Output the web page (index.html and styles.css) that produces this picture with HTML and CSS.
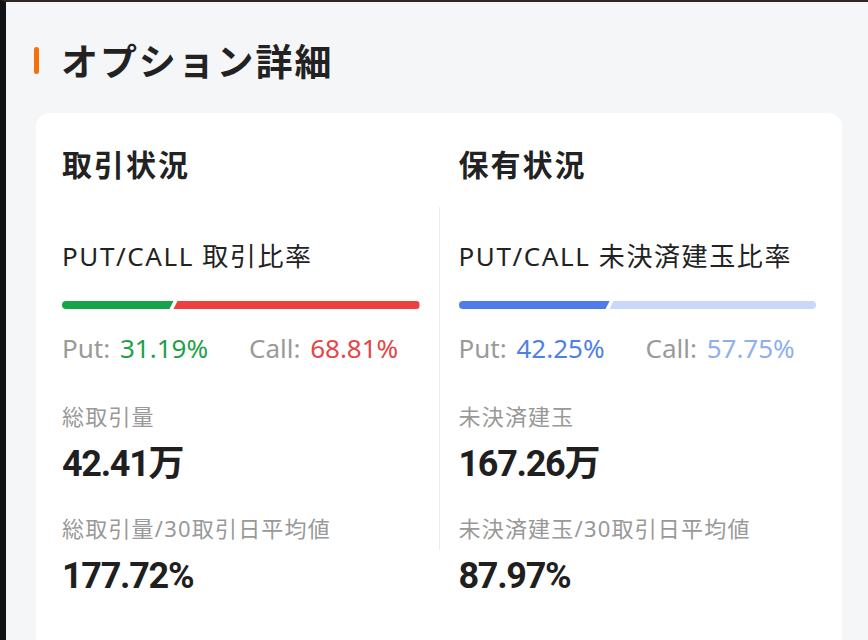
FILE: index.html
```html
<!DOCTYPE html>
<html lang="ja">
<head>
<meta charset="utf-8">
<link rel="stylesheet" href="styles.css">
</head>
<body>
<div class="page">
  <h1 class="title"><span class="mark"></span>オプション詳細</h1>
  <div class="card">
    <div class="col">
      <h2 class="col-title">取引状況</h2>
      <div class="ratio-label">PUT/CALL 取引比率</div>
      <div class="bar">
        <div class="seg seg-a green" style="width:31.19%"></div>
        <div class="seg seg-b red"></div>
      </div>
      <div class="pc">
        <span class="k">Put: <span class="v-green">31.19%</span></span>
        <span class="k">Call: <span class="v-red">68.81%</span></span>
      </div>
      <div class="stat-label first">総取引量</div>
      <div class="stat-value">42.41万</div>
      <div class="stat-label">総取引量/30取引日平均値</div>
      <div class="stat-value">177.72%</div>
    </div>
    <div class="divider"></div>
    <div class="col">
      <h2 class="col-title">保有状況</h2>
      <div class="ratio-label">PUT/CALL 未決済建玉比率</div>
      <div class="bar">
        <div class="seg seg-a blue" style="width:42.25%"></div>
        <div class="seg seg-b lightblue"></div>
      </div>
      <div class="pc">
        <span class="k">Put: <span class="v-blue">42.25%</span></span>
        <span class="k">Call: <span class="v-lightblue">57.75%</span></span>
      </div>
      <div class="stat-label first">未決済建玉</div>
      <div class="stat-value">167.26万</div>
      <div class="stat-label">未決済建玉/30取引日平均値</div>
      <div class="stat-value">87.97%</div>
    </div>
  </div>
</div>
</body>
</html>
```

FILE: styles.css
```css
html, body {
  margin: 0;
  padding: 0;
  height: 100%;
}
body {
  background: #f5f6f8;
  border-left: 6px solid #111214;
  border-top: 2px solid #2e2622;
  box-sizing: border-box;
  font-family: "Noto Sans", "Noto Sans CJK JP", sans-serif;
  color: #222;
  overflow: hidden;
}
.page {
  padding: 32px 26px 0 30px;
}
.title {
  display: flex;
  align-items: center;
  margin: 0 0 27px -2px;
  height: 52px;
  font-size: 37px;
  font-weight: 700;
  color: #222;
  letter-spacing: 1.9px;
}
.mark {
  width: 5px;
  height: 27px;
  border-radius: 3px;
  background: #f5700a;
  margin-right: 22px;
}
.card {
  background: #fff;
  border-radius: 14px 14px 0 0;
  padding: 32px 26px 60px 26px;
  display: grid;
  grid-template-columns: 1fr 1px 1fr;
  column-gap: 19px;
  align-items: start;
}
.divider {
  margin-top: 62px;
  height: 343px;
  background: #ececec;
}
.col-title {
  margin: 0;
  font-size: 30px;
  line-height: 40px;
  font-weight: 700;
  color: #222;
  letter-spacing: 2px;
}
.ratio-label {
  margin-top: 53px;
  font-size: 26px;
  line-height: 36px;
  color: #222;
  letter-spacing: 1.6px;
}
.bar {
  margin-top: 27px;
  height: 8px;
  display: flex;
}
.seg {
  height: 8px;
}
.seg-a {
  border-radius: 4px 0 0 4px;
  clip-path: polygon(0 0, 100% 0, calc(100% - 4px) 100%, 0 100%);
}
.seg-b {
  flex: 1;
  margin-left: -1px;
  border-radius: 0 4px 4px 0;
  clip-path: polygon(5px 0, 100% 0, 100% 100%, 1px 100%);
}
.green { background: #17a34a; }
.red { background: #ef4040; }
.blue { background: #4f7ce9; }
.lightblue { background: #c9d8f8; }
.pc {
  margin-top: 21px;
  font-size: 26px;
  line-height: 36px;
  display: flex;
  gap: 41px;
  word-spacing: 3px;
}
.k { color: #9a9a9a; }
.v-green { color: #1f9f4c; }
.v-red { color: #e34646; }
.v-blue { color: #4f80e6; }
.v-lightblue { color: #8db0ef; }
.stat-label {
  margin-top: 29px;
  font-size: 22px;
  line-height: 30px;
  color: #999;
  letter-spacing: 1.2px;
}
.stat-label.first {
  margin-top: 35px;
}
.stat-value {
  margin-top: 13px;
  font-family: "Roboto", "Noto Sans CJK JP", sans-serif;
  font-size: 36px;
  line-height: 40px;
  font-weight: 700;
  color: #1f1f1f;
  letter-spacing: -1.3px;
}
```
